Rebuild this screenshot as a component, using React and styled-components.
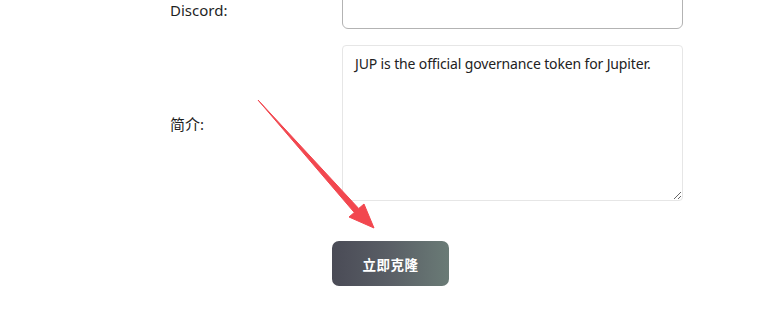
import React from 'react';
import styled, { createGlobalStyle } from 'styled-components';

const GlobalStyle = createGlobalStyle`
  html, body {
    margin: 0;
    padding: 0;
    background: #ffffff;
    overflow: hidden;
  }
  body {
    font-family: 'Noto Sans', 'Noto Sans CJK SC', sans-serif;
  }
`;

const App = () => {
  return (
    <Page>
      <GlobalStyle />
      <Form>
        <Row>
          <Label>Discord:</Label>
          <Input type="text" />
        </Row>
        <Row>
          <Label>简介:</Label>
          <TextArea defaultValue="JUP is the official governance token for Jupiter." />
        </Row>
        <Actions>
          <Button>立即克隆</Button>
        </Actions>
      </Form>
      <Arrow viewBox="0 0 130 140" width="130" height="140">
        <polygon
          points="8,10 108.7,118.5 114,114 124,138 99,127 104.3,122.5"
          fill="#f2474f"
          stroke="#f2474f"
          strokeWidth="1"
          strokeLinejoin="round"
        />
      </Arrow>
    </Page>
  );
};

export default App;

const Page = styled.div`
  position: relative;
  width: 768px;
  height: 314px;
  overflow: hidden;
`;

const Form = styled.div`
  display: flex;
  flex-direction: column;
  gap: 16px;
  margin-top: -9px;
  padding-left: 170px;
`;

const Row = styled.div`
  display: flex;
  align-items: center;
`;

const Label = styled.div`
  width: 172px;
  font-size: 15px;
  color: #1f1f1f;
  font-family: 'Noto Sans', 'Noto Sans CJK SC', sans-serif;
`;

const Input = styled.input`
  box-sizing: border-box;
  width: 341px;
  height: 38px;
  border: 1px solid #b3b3b3;
  border-radius: 6px;
  outline: none;
  padding: 0 12px;
  font-size: 14px;
`;

const TextArea = styled.textarea`
  box-sizing: border-box;
  width: 341px;
  height: 156px;
  border: 1px solid #e6e6e6;
  border-radius: 4px;
  padding: 7px 12px;
  font-size: 14px;
  letter-spacing: -0.14px;
  line-height: 22px;
  color: #222222;
  font-family: 'Noto Sans', 'Noto Sans CJK SC', sans-serif;
  outline: none;
  resize: vertical;
`;

const Actions = styled.div`
  display: flex;
  padding-left: 162px;
  margin-top: 24px;
`;

const Button = styled.button`
  width: 117px;
  height: 45px;
  border: none;
  border-radius: 7px;
  background: linear-gradient(90deg, #4a4b56 0%, #5a5f66 50%, #6a7b76 100%);
  color: #ffffff;
  font-size: 13.5px;
  font-weight: 700;
  font-family: 'Noto Sans CJK SC', sans-serif;
  letter-spacing: 0.5px;
`;

const Arrow = styled.svg`
  position: absolute;
  left: 250px;
  top: 90px;
`;
